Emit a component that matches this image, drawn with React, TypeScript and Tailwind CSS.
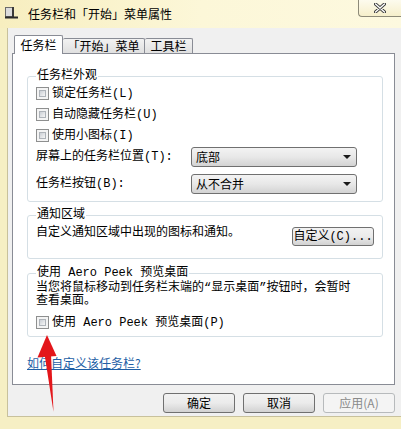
import type { ReactNode } from "react";

const mono = "font-['Liberation_Mono','Noto_Sans_CJK_SC',monospace]";
const sans = "font-['Noto_Sans_CJK_SC','Liberation_Sans',sans-serif]";

function Check({ label }: { label: ReactNode }) {
  return (
    <div className="flex h-[21px] items-center gap-[3px]">
      <span className="block h-[13px] w-[13px] border border-[#8e8f8f] bg-[#f4f4f4] p-[2px]">
        <span className="block h-full w-full border border-[#aeb3b9] bg-linear-to-br from-[#cbcfd5] to-[#f6f6f6]" />
      </span>
      <span className="leading-[14px]">{label}</span>
    </div>
  );
}

function Select({ value }: { value: string }) {
  return (
    <div className="flex h-[20px] w-[166px] items-center rounded-[3px] border border-[#707070] bg-linear-to-b from-[#f3f3f3] via-[#e8e8e8] to-[#d3d3d3] pl-[4px] pr-[5px]">
      <span className={`flex-1 ${sans} text-[12px] leading-[14px]`}>{value}</span>
      <svg width="8" height="4" viewBox="0 0 8 4">
        <path d="M0 0h8L4 4z" fill="#1a1a1a" />
      </svg>
    </div>
  );
}

function Button({ children, disabled }: { children: ReactNode; disabled?: boolean }) {
  return (
    <div
      className={`flex h-[20px] w-[72px] items-center justify-center rounded-[3px] border ${sans} text-[12px] leading-[14px] ${
        disabled
          ? "border-[#b7babc] bg-[#f4f4f4] text-[#8a8a8a]"
          : "border-[#707070] bg-linear-to-b from-[#f2f2f2] via-[#ebebeb] to-[#d2d2d2] text-black"
      }`}
    >
      {children}
    </div>
  );
}

export default function App() {
  return (
    <div className="relative flex h-[429px] w-[401px] flex-col overflow-hidden bg-[#f6efc4] text-black">
      {/* title bar */}
      <div className="flex h-[28px] items-start bg-linear-to-r from-[#f7eebf] via-[#fcf7d8] to-[#fdf9df]">
        <svg className="mt-[7px] ml-[5px]" width="13" height="12" viewBox="0 0 13 12">
          <rect x="0.5" y="0.5" width="7" height="9" fill="#dcdcdc" stroke="#6b6b6b" />
          <rect x="7" y="0" width="2" height="10" fill="#3a3a3a" />
          <rect x="0" y="9.5" width="13" height="2" fill="#2a2a2a" />
        </svg>
        <span className={`mt-[7px] ml-[10px] ${sans} text-[12px] leading-[14px]`}>
          任务栏和「开始」菜单属性
        </span>
        <div className="ml-auto flex h-[17px] w-[43px] items-center justify-center rounded-bl-[4px] border-b border-l border-[#8d8a78] bg-linear-to-b from-[#fdfbee] to-[#f6efcb]">
          <svg width="12" height="10" viewBox="0 0 12 10">
            <path d="M1.5 1L10.5 9M10.5 1L1.5 9" stroke="#3a3a3a" strokeWidth="3.2" strokeLinecap="round" />
            <path d="M1.5 1L10.5 9M10.5 1L1.5 9" stroke="#ffffff" strokeWidth="1.4" strokeLinecap="round" />
          </svg>
        </div>
      </div>

      {/* body */}
      <div className="flex flex-1 pb-[12px] pl-[7px]">
        <div className="flex flex-1 flex-col border-b border-l border-[#c8c19c] bg-[#f0f0f0] pt-[7px] pr-[6px] pl-[4px]">
          {/* tabs */}
          <div className={`flex h-[18px] items-end ${sans} text-[12px]`}>
            <div className="relative z-10 mb-[-1px] ml-[2px] flex h-[19px] w-[49px] items-center justify-center rounded-t-[2px] border border-b-0 border-[#898c95] bg-white leading-[14px]">
              任务栏
            </div>
            <div className="flex h-[15px] w-[82px] items-center justify-center rounded-t-[2px] border border-b-0 border-l-0 border-[#898c95] bg-linear-to-b from-[#f2f2f2] to-[#e0e0e0] leading-[14px]">
              「开始」菜单
            </div>
            <div className="flex h-[15px] w-[48px] items-center justify-center rounded-t-[2px] border border-b-0 border-l-0 border-[#898c95] bg-linear-to-b from-[#f2f2f2] to-[#e0e0e0] leading-[14px]">
              工具栏
            </div>
          </div>

          {/* panel */}
          <div className={`flex h-[332px] flex-col border border-[#898c95] bg-white pt-[15px] pr-[11px] pl-[14px] ${mono} text-[12px]`}>
            <fieldset className="rounded-[3px] border border-[#d5dfe5] px-[8px] pb-[7px]">
              <legend className="px-[1px] leading-[14px]">任务栏外观</legend>
              <Check label="锁定任务栏(L)" />
              <Check label="自动隐藏任务栏(U)" />
              <Check label="使用小图标(I)" />
              <div className="mt-[1px] flex h-[20px] items-center">
                <span className="w-[155px] leading-[14px]">屏幕上的任务栏位置(T):</span>
                <Select value="底部" />
              </div>
              <div className="mt-[7px] flex h-[20px] items-center">
                <span className="w-[155px] leading-[14px]">任务栏按钮(B):</span>
                <Select value="从不合并" />
              </div>
            </fieldset>

            <fieldset className="mt-[6px] rounded-[3px] border border-[#d5dfe5] px-[8px] pb-[12px]">
              <legend className="px-[1px] leading-[14px]">通知区域</legend>
              <div className="mt-[4px] flex items-start">
                <span className="flex-1 leading-[14px]">自定义通知区域中出现的图标和通知。</span>
                <div className="mt-[1px] flex h-[19px] w-[82px] items-center justify-center rounded-[3px] border border-[#707070] bg-linear-to-b from-[#f2f2f2] via-[#ebebeb] to-[#d2d2d2] leading-[14px]">
                  自定义(C)...
                </div>
              </div>
            </fieldset>

            <fieldset className="mt-[7px] rounded-[3px] border border-[#d5dfe5] px-[8px] pb-[3px]">
              <legend className="px-[1px] leading-[14px]">使用 Aero Peek 预览桌面</legend>
              <p className="mt-[2px] leading-[13px]">
                当您将鼠标移动到任务栏末端的“显示桌面”按钮时，会暂时
                <br />
                查看桌面。
              </p>
              <div className="mt-[4px]">
                <Check label="使用 Aero Peek 预览桌面(P)" />
              </div>
            </fieldset>

            <a className={`mt-[19px] self-start ${sans} leading-[14px] text-[#1f5fa6] underline`}>
              如何自定义该任务栏?
            </a>
          </div>

          {/* buttons */}
          <div className="mt-[8px] flex justify-end gap-[8px]">
            <Button>确定</Button>
            <Button>取消</Button>
            <Button disabled>应用(A)</Button>
          </div>
        </div>
      </div>

      {/* red annotation arrow */}
      <svg className="pointer-events-none absolute top-0 left-0" width="401" height="429" viewBox="0 0 401 429">
        <path d="M47 335L37.5 357.5L56.5 356Z" fill="#e3161b" />
        <path d="M44.5 354L51 354L53.5 412Z" fill="#e3161b" />
      </svg>
    </div>
  );
}
